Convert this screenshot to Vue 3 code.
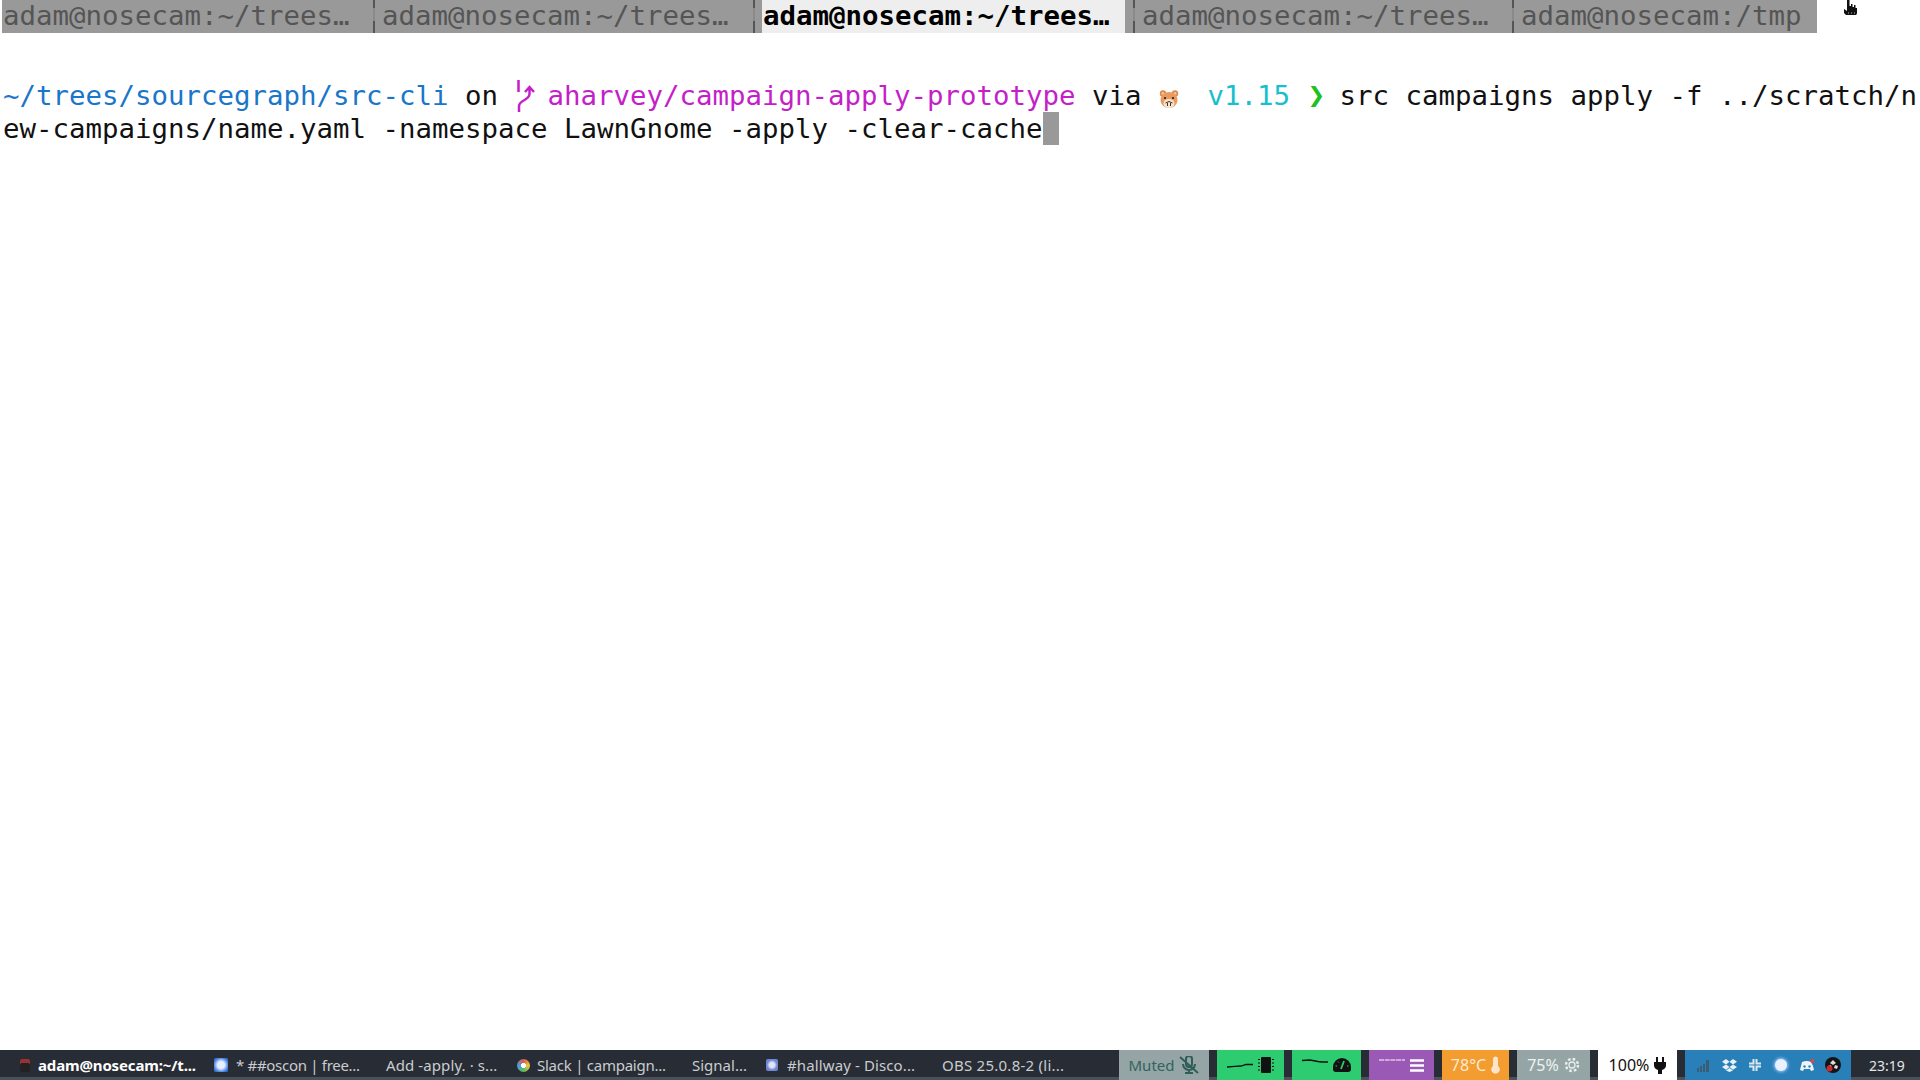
<script setup>
const tabs = [
  { t: 'adam@nosecam:~/trees…', w: 371 },
  { t: 'adam@nosecam:~/trees…', w: 380, sep: true },
  { t: '', w: 9, sep: true },
  { t: 'adam@nosecam:~/trees…', w: 363, active: true },
  { t: '', w: 8 },
  { t: 'adam@nosecam:~/trees…', w: 379, sep: true },
  { t: 'adam@nosecam:/tmp', w: 305, sep: true }
]
const apps = [
  { t: 'adam@nosecam:~/t...', w: 194, icon: 'i-term', bold: true, ls: -0.15 },
  { t: '* ##oscon | free...', w: 172, icon: 'i-blue', ls: -0.3 },
  { t: 'Add -apply. · s...', w: 131, ls: 0.1 },
  { t: 'Slack | campaign...', w: 175, icon: 'i-slack', ls: -0.25 },
  { t: 'Signal...', w: 74, ls: 0 },
  { t: '#hallway - Disco...', w: 176, icon: 'i-disc', ls: 0.12 },
  { t: 'OBS 25.0.8-2 (li...', w: 170, ls: 0.25 }
]
</script>

<template>
  <div class="screen">
    <div class="tabs">
      <div v-for="(tab, i) in tabs" :key="i" class="tab" :class="{ active: tab.active, sep: tab.sep }" :style="{ width: tab.w + 'px' }">{{ tab.t }}</div>
      <svg class="cursor" width="15" height="16" viewBox="0 0 15 16"><path d="M4 0h2.500v6H8V4h1.500v3H11V5h1.500v3H14v5.500L13 15H3L1 13V9l3 2z" fill="#111"/><path d="M5 13h1M8 13h1M11 13h1" stroke="#bbb"/></svg>
    </div>
    <main class="term">
      <div class="line"><span class="path">~/trees/sourcegraph/src-cli</span> on <span class="cell one"><svg class="branch" width="20" height="33" viewBox="0 0 20 33"><path d="M3.500 1v12M14.500 8v7q0 3-5 6-5.500 3-5.500 6v6M10 13l4.500-5 4.500 5" fill="none" stroke="#c41fc8" stroke-width="2.500"/></svg></span> <span class="mag">aharvey/campaign-apply-prototype</span> via <span class="cell two"><svg class="ham" width="20" height="18" viewBox="0 0 20 18"><circle cx="4" cy="3.500" r="3.200" fill="#d98a4c"/><circle cx="4" cy="3.500" r="1.500" fill="#f2c9a0"/><circle cx="16" cy="3.500" r="3.200" fill="#d98a4c"/><circle cx="16" cy="3.500" r="1.500" fill="#f2c9a0"/><ellipse cx="10" cy="10" rx="8.500" ry="8" fill="#e99a5c"/><ellipse cx="10" cy="13.500" rx="5.500" ry="4.500" fill="#f8e4cc"/><circle cx="6" cy="8" r="1.100" fill="#222"/><circle cx="14" cy="8" r="1.100" fill="#222"/><path d="M6.500 13l3.500-1.500 3.500 1.500M8.500 16v-3M11.500 16v-3" fill="none" stroke="#333" stroke-width="1"/></svg></span> <span class="cyan">v1.15</span> <span class="cell one"><span class="chev">❯</span></span> src campaigns apply -f ../scratch/n</div>
      <div class="line">ew-campaigns/name.yaml -namespace LawnGnome -apply -clear-cache<span class="caret"></span></div>
    </main>
    <footer class="bar">
      <div class="apps">
        <div v-for="(a, i) in apps" :key="i" class="app" :class="{ bold: a.bold }" :style="{ width: a.w + 'px', letterSpacing: a.ls + 'px' }">
          <span v-if="a.icon" class="ic" :class="a.icon"></span>{{ a.t }}
        </div>
      </div>
      <div class="seg muted">Muted
        <svg width="20" height="18" viewBox="0 0 20 18"><path d="M7 3a3 3 0 0 1 6 0v5a3 3 0 0 1-6 0zM4 8a6 6 0 0 0 12 0M10 14v3M6 17h8" fill="none" stroke="#2f5d58" stroke-width="2"/><path d="M1 1l18 16" stroke="#2f5d58" stroke-width="2"/></svg>
      </div>
      <div class="seg g1">
        <svg width="26" height="30" viewBox="0 0 26 30"><path d="M0 17l8-.6 6-.4 5-1.500 7 0" fill="none" stroke="#111" stroke-width="1.300"/></svg>
        <svg width="16" height="16" viewBox="0 0 16 16"><rect x="3" y="0" width="10" height="16" rx="1" fill="#111"/><path d="M0 2.500h2M0 6h2M0 9.500h2M0 13h2M14 2.500h2M14 6h2M14 9.500h2M14 13h2" stroke="#111" stroke-width="1"/></svg>
      </div>
      <div class="seg g2">
        <svg width="26" height="30" viewBox="0 0 26 30"><path d="M0 10.500l8-.5 8 1.500 4 .5 6 0" fill="none" stroke="#111" stroke-width="1.300"/></svg>
        <svg width="18" height="14" viewBox="0 0 18 14"><path d="M9 0a9 9 0 0 1 9 9v2a3 3 0 0 1-3 3H3a3 3 0 0 1-3-3V9a9 9 0 0 1 9-9z" fill="#111"/><path d="M8 11l3-8" stroke="#2ecc71" stroke-width="1.800"/><path d="M2.500 8h1.500M14 8h1.500M5 3.500l1 1" stroke="#2ecc71" stroke-width="1"/></svg>
      </div>
      <div class="seg purple">
        <svg width="26" height="30" viewBox="0 0 26 30"><path d="M0 10h26" stroke="#fff" stroke-width="1.200" stroke-dasharray="5 .7"/></svg>
        <svg width="14" height="13" viewBox="0 0 14 13"><path d="M0 1.500h14M0 6.500h14M0 11.500h14" stroke="#fff" stroke-width="2.400"/></svg>
      </div>
      <div class="seg orange">78°C
        <svg width="9" height="18" viewBox="0 0 9 18"><path d="M2 3a2.500 2.500 0 0 1 5 0v7a4.300 4.300 0 1 1-5 0z" fill="#fbe4cc"/></svg>
      </div>
      <div class="seg gray">75%
        <svg width="16" height="16" viewBox="0 0 16 16"><circle cx="8" cy="8" r="3" fill="none" stroke="#e8f0ee" stroke-width="1.300"/><circle cx="8" cy="8" r="6" fill="none" stroke="#e8f0ee" stroke-width="2.400" stroke-dasharray="2.600 2.100"/></svg>
      </div>
      <div class="seg white">100%
        <svg width="12" height="17" viewBox="0 0 12 17"><path d="M2 0h2v5h4V0h2v5h2v3a5 5 0 0 1-4 5v4H4v-4a5 5 0 0 1-4-5V5h2z" fill="#111"/></svg>
      </div>
      <div class="tray">
        <span class="slot"><svg width="13" height="13" viewBox="0 0 13 13"><path d="M0 9h2v4H0zM3 7h2v6H3zM6 5h2v8H6zM9 1h3v12H9z" fill="#3a5c74"/></svg></span>
        <span class="slot"><svg width="15" height="13" viewBox="0 0 15 13"><path d="M4 0L0 2.700 4 5.400 7.500 2.700zM11 0L7.500 2.700 11 5.400 15 2.700zM4 5.400L0 8l4 2.700L7.500 8zM11 5.400L7.500 8 11 10.700 15 8zM4 11.400L7.500 13 11 11.400 7.500 9z" fill="#e8f1f7"/></svg></span>
        <span class="slot"><svg width="14" height="14" viewBox="0 0 14 14"><path d="M5.500 1v4.500H1M8.500 13V8.500H13M1 8.500h4.500V13M13 5.500H8.500V1" fill="none" stroke="#dbe7f0" stroke-width="2"/></svg></span>
        <span class="slot"><span class="glow"></span></span>
        <span class="slot"><svg width="16" height="13" viewBox="0 0 16 13"><path d="M3 3q5-2 9 0l2 4 1 4-3 1-1-2H5l-1 2-3-1 1-4z" fill="#eef3f8"/><circle cx="5.500" cy="7.500" r="1.200" fill="#2980b9"/><circle cx="10.500" cy="7.500" r="1.200" fill="#2980b9"/><circle cx="13.500" cy="2" r="2" fill="#e8443a"/></svg></span>
        <span class="slot"><svg width="16" height="16" viewBox="0 0 16 16"><circle cx="8" cy="8" r="8" fill="#141414"/><path d="M8 3l3 3-3 2-3-2zM3 9l3-1 1 3-3 1zM13 9l-3-1-1 3 3 1z" fill="#ddd"/><circle cx="4.500" cy="11.500" r="3" fill="#cc2a2a"/></svg></span>
      </div>
      <div class="clock">23:19</div>
    </footer>
  </div>
</template>

<style>
html, body { margin: 0; background: #fff; }
</style>

<style scoped>
.screen { width: 1920px; height: 1080px; display: flex; flex-direction: column; overflow: hidden; background: #fff; font-family: "DejaVu Sans Mono", monospace; color: #111; font-size: 27.41px; }
.tabs { height: 33px; display: flex; padding-left: 2px; line-height: 31px; flex: none; position: relative; }
.tab { background: #999; color: #555; box-sizing: border-box; white-space: pre; overflow: hidden; flex: none; position: relative; padding-left: 1px; }
.tab.sep { padding-left: 9px; }
.tab.sep::before { content: ""; position: absolute; left: 0; top: 0; bottom: 0; width: 2px; background: linear-gradient(#555 0 8px, #8a8a8a 8px 21px, #555 21px 33px); }
.tab.active { background: #eee; color: #000; font-weight: 700; }
.cursor { position: absolute; left: 1843px; top: 0; }
.term { flex: 1; padding: 46px 0 0 3px; line-height: 33px; white-space: pre; }
.line { height: 33px; }
.path { color: #1a76c9; }
.mag { color: #c41fc8; }
.cyan { color: #17bfcf; }
.cell { display: inline-block; height: 33px; vertical-align: top; position: relative; }
.cell.one { width: 1ch; }
.cell.two { width: 2ch; }
.branch { display: block; }
.ham { display: block; margin: 11px 0 0 1px; }
.chev { display: block; color: #21c021; font: 700 21px/33px "DejaVu Sans", sans-serif; padding-left: 1px; }
.caret { display: inline-block; width: 1ch; height: 33px; background: #999; vertical-align: top; }
.bar { height: 30px; flex: none; display: flex; background: #282c34; box-shadow: inset 0 -3px 0 #4b5159; font: 15px "Noto Sans", sans-serif; color: #c9ccd1; }
.apps { display: flex; width: 1119px; padding-left: 20px; box-sizing: border-box; flex: none; }
.app { display: flex; align-items: center; height: 30px; white-space: pre; flex: none; }
.app.bold { color: #fff; font-weight: 700; }
.ic { margin-right: 8px; border-radius: 2px; flex: none; }
.i-term { background: #222; width: 10px; height: 13px; box-shadow: inset 0 4px 0 #933; }
.i-blue { width: 14px; height: 14px; background: radial-gradient(#e6efff 35%, #3c78e0 75%); }
.i-slack { width: 13px; height: 13px; margin-right: 7px; border-radius: 50%; background: radial-gradient(#fff 25%, transparent 30%), conic-gradient(#e05a4d, #f1c34a, #5cb85c, #4d9de0, #e05a4d); }
.i-disc { width: 12px; height: 12px; margin-right: 9px; background: radial-gradient(#dfe4f7 30%, #6f86d6 60%); }
.seg { display: flex; align-items: center; justify-content: center; gap: 5px; height: 30px; box-sizing: border-box; flex: none; margin-right: 8px; }
.muted { width: 90px; background: #95a5a6; color: #33635e; }
.g1 { width: 67px; background: #2ecc71; }
.g2 { width: 69px; background: #2ecc71; }
.purple { width: 65px; background: #9b59b6; }
.orange { width: 67px; background: #f39c2f; color: #fde9d2; font-size: 16px; }
.gray { width: 73px; background: #95a5a6; color: #edf3f2; font-size: 16px; }
.white { width: 79px; background: #fff; color: #111; font-size: 16px; }
.tray { width: 166px; height: 30px; display: flex; background: #2980b9; padding-left: 5px; box-sizing: border-box; flex: none; }
.slot { width: 26px; display: flex; align-items: center; justify-content: center; }
.glow { width: 12px; height: 12px; border-radius: 50%; background: #e8f1ff; box-shadow: 0 0 3px 1px #a6c8ff; }
.clock { flex: 1; height: 30px; padding-left: 3px; display: flex; align-items: center; justify-content: center; color: #e4e6e8; font-size: 14px; }
</style>
